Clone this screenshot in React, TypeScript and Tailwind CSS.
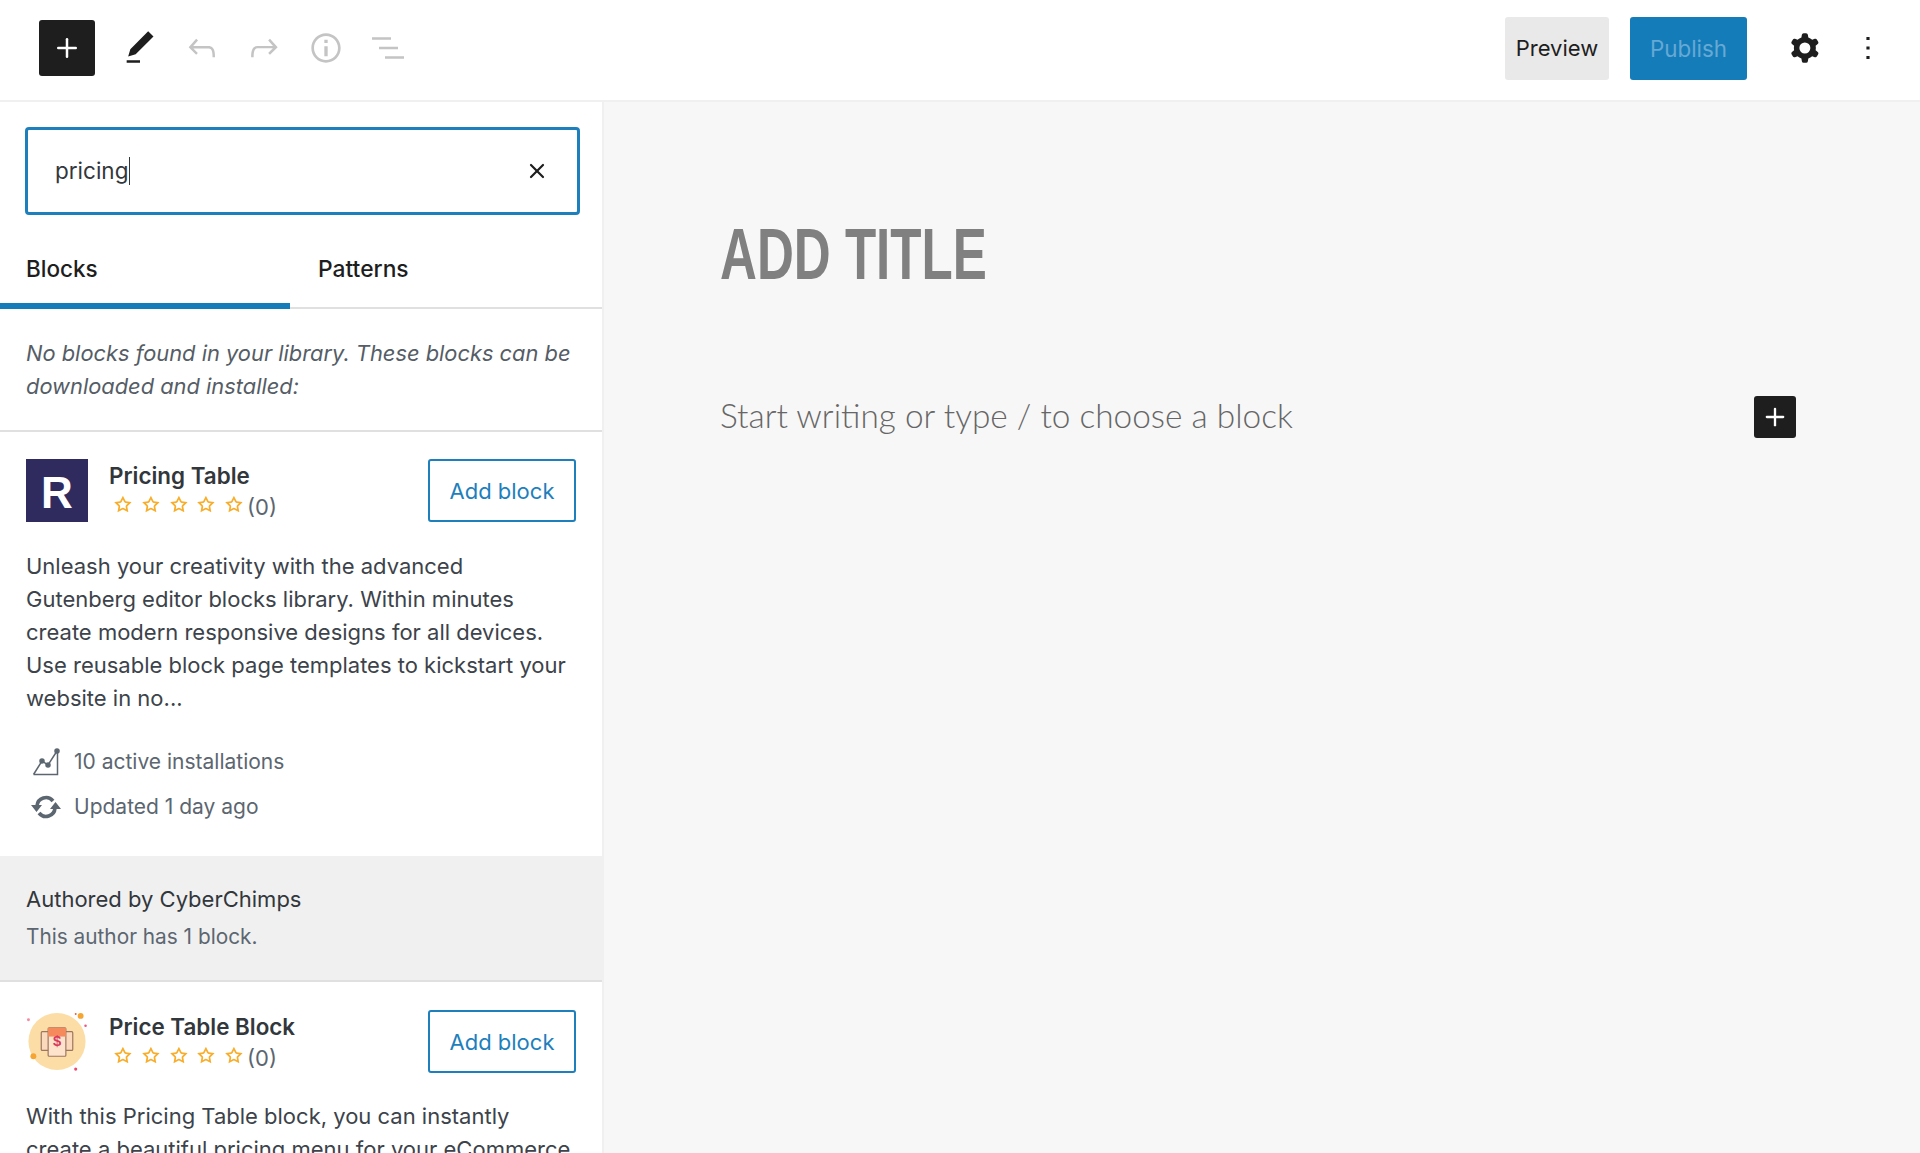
import { Plus, X } from "lucide-react";

const Wp = ({ d, className, box = "0 0 24 24" }: { d: string; className: string; box?: string }) => (
  <svg viewBox={box} fill="currentColor" className={className}>
    <path d={d} fillRule="evenodd" clipRule="evenodd" />
  </svg>
);

const icons = {
  pencil: "M20.1 5.1L16.9 2 6.2 12.7l-1.3 4.4 4.5-1.3L20.1 5.1zM4 20.8h8v-1.5H4v1.5z",
  undo: "M18.3 11.7c-.6-.6-1.4-.9-2.3-.9H6.7l2.9-3.3-1.1-1-4.5 5L8.5 16l1-1-2.7-2.7H16c.5 0 .9.2 1.3.5 1 1 1 3.4 1 4.5v.3h1.5v-.2c0-1.5 0-4.3-1.5-5.7z",
  redo: "M15.6 6.5l-1.1 1 2.9 3.3H8c-.9 0-1.7.3-2.3.9-1.4 1.5-1.4 4.2-1.4 5.6v.2h1.5v-.3c0-1.1 0-3.5 1-4.5.3-.3.7-.5 1.3-.5h9.2L14.5 15l1.1 1.1 4.6-4.6-4.6-5z",
  info: "M12 3.2c-4.8 0-8.8 3.9-8.8 8.8 0 4.8 3.9 8.8 8.8 8.8 4.8 0 8.8-3.9 8.8-8.8 0-4.8-4-8.8-8.8-8.8zm0 16c-4 0-7.2-3.3-7.2-7.2C4.8 8 8 4.8 12 4.8s7.2 3.3 7.2 7.2c0 4-3.2 7.2-7.2 7.2zM11 17h2v-6h-2v6zm0-8h2V7h-2v2z",
  list: "M2.4 5.6h11.4V7H2.4V5.6zm4.2 5.7H18v1.4H6.6v-1.4zM10.2 17h11.4v1.4H10.2V17z",
  cog: "M10.289 4.836A1 1 0 0111.275 4h1.306a1 1 0 01.987.836l.244 1.466c.787.26 1.503.679 2.108 1.218l1.393-.522a1 1 0 011.216.437l.653 1.13a1 1 0 01-.23 1.273l-1.148.944a6.025 6.025 0 010 2.435l1.149.946a1 1 0 01.23 1.272l-.653 1.13a1 1 0 01-1.216.436l-1.394-.522c-.605.54-1.32.958-2.108 1.218l-.244 1.466a1 1 0 01-.987.836h-1.306a1 1 0 01-.986-.836l-.244-1.466a5.995 5.995 0 01-2.108-1.218l-1.394.522a1 1 0 01-1.217-.436l-.653-1.131a1 1 0 01.23-1.272l1.149-.946a6.026 6.026 0 010-2.435l-1.148-.944a1 1 0 01-.23-1.272l.653-1.131a1 1 0 011.217-.437l1.393.522a5.994 5.994 0 012.108-1.218l.244-1.466zM14.929 12a3 3 0 11-6 0 3 3 0 016 0z",
  more: "M13 19h-2v-2h2v2zm0-6h-2v-2h2v2zm0-6h-2V5h2v2z",
  star: "M9.706 8.646a.25.25 0 01-.188.137l-4.626.672a.25.25 0 00-.139.427l3.348 3.262a.25.25 0 01.072.222l-.79 4.607a.25.25 0 00.362.264l4.138-2.176a.25.25 0 01.233 0l4.137 2.175a.25.25 0 00.363-.263l-.79-4.607a.25.25 0 01.072-.222l3.347-3.262a.25.25 0 00-.139-.427l-4.626-.672a.25.25 0 01-.188-.137l-2.069-4.192a.25.25 0 00-.448 0L9.706 8.646zM12 7.39l-.948 1.921a1.75 1.75 0 01-1.317.957l-2.12.308 1.534 1.495c.412.402.6.982.503 1.55l-.362 2.11 1.896-.997a1.75 1.75 0 011.629 0l1.895.997-.362-2.11a1.75 1.75 0 01.504-1.55l1.533-1.495-2.12-.308a1.75 1.75 0 01-1.317-.957L12 7.39z",
};

const Stars = () => (
  <div className="flex items-center mt-[-1px]">
    {[0, 1, 2, 3, 4].map((i) => (
      <Wp key={i} d={icons.star} className="w-[27.8px] h-[27.8px] text-[#f8ae2b]" />
    ))}
    <span className="ml-[-1px] pt-[4px] text-[22px] leading-[28px] text-[#5c6670]">(0)</span>
  </div>
);

const BlockHeader = ({ name, logo }: { name: string; logo: React.ReactNode }) => (
  <div className="flex items-start">
    {logo}
    <div className="ml-[21px] w-[319px] pt-[2.5px]">
      <div className="text-[22.4px] leading-[28px] font-semibold text-[#32373c]">{name}</div>
      <Stars />
    </div>
    <button className="w-[148px] h-[63px] shrink-0 rounded-[3px] border-2 border-[#1e7fbd] bg-white pt-[1px] text-[22px] text-[#1e7fbd]">
      Add block
    </button>
  </div>
);

const RLogo = (
  <div className="w-[62px] h-[63px] shrink-0 flex items-center justify-center bg-[#2f2b5f] pt-[5px] font-['Liberation_Sans',sans-serif] text-white text-[44px] leading-none font-bold">
    R
  </div>
);

const PriceLogo = (
  <svg viewBox="0 0 62 64" className="w-[62px] h-[63px] shrink-0">
    <circle cx="31" cy="32" r="29" fill="#fcdda5" />
    <circle cx="55" cy="6" r="3" fill="#f6a530" />
    <circle cx="50" cy="4" r="1" fill="#e8603c" />
    <circle cx="2" cy="10" r="1.5" fill="#f58aa0" />
    <circle cx="60" cy="16" r="1.3" fill="#f0567a" />
    <circle cx="7" cy="47" r="3" fill="#f6a530" />
    <circle cx="50" cy="60" r="1.6" fill="#f0466a" />
    <rect x="15" y="22" width="32" height="19" fill="#fbd9bd" stroke="#9c7660" strokeWidth="1.2" rx="1" />
    <rect x="22" y="18" width="18" height="29" fill="#fde3cc" stroke="#9c7660" strokeWidth="1.2" rx="1" />
    <rect x="22" y="18" width="18" height="9" fill="#f58a5c" />
    <text x="31" y="37" fontSize="15" fontWeight="700" fill="#d83a5c" textAnchor="middle" fontFamily="Liberation Sans, sans-serif">
      $
    </text>
  </svg>
);

const ChartIcon = () => (
  <svg viewBox="0 0 28 28" className="w-[28px] h-[28px] text-[#5c6670]" fill="none" stroke="currentColor" strokeWidth="1.5">
    <path d="M1.5 26.5L10 13l6 4 9-14M1.5 26.5H25.5V3" />
    <circle cx="10" cy="13" r="2" fill="currentColor" />
    <circle cx="16" cy="17" r="2" fill="currentColor" />
    <circle cx="25" cy="3" r="2" fill="currentColor" />
  </svg>
);

const UpdateIcon = () => (
  <svg viewBox="0 0 32 28" className="w-[32px] h-[28px] text-[#5c6670]" fill="none">
    <path d="M7 13a9 9 0 0 1 16-5M25 15a9 9 0 0 1-16 5" stroke="currentColor" strokeWidth="3.6" />
    <path d="M1 12h11l-5.5 7zM31 16H20l5.5-7z" fill="currentColor" />
  </svg>
);

export default function App() {
  return (
    <div className="w-[1920px] h-[1153px] flex flex-col overflow-hidden bg-white font-['Inter',sans-serif] text-[#1e1e1e] antialiased">
      <header className="h-[102px] shrink-0 flex items-center border-b-2 border-[#f0f0f0] bg-white pl-[39px] pr-[33px] pb-[4px]">
        <button className="w-[56px] h-[56px] flex items-center justify-center rounded-[3px] bg-[#1e1e1e] text-white">
          <Plus size={30} strokeWidth={2} />
        </button>
        <Wp d={icons.pencil} className="ml-[25px] w-[40px] h-[40px] text-[#1e1e1e]" />
        <Wp d={icons.undo} className="ml-[22px] w-[40px] h-[40px] text-[#c4c4c4]" />
        <Wp d={icons.redo} className="ml-[22px] w-[40px] h-[40px] text-[#c4c4c4]" />
        <Wp d={icons.info} className="ml-[22px] w-[40px] h-[40px] text-[#c4c4c4]" />
        <Wp d={icons.list} className="ml-[22px] w-[40px] h-[40px] text-[#c4c4c4]" />
        <button className="ml-auto w-[104px] h-[63px] rounded-[3px] bg-[#e9e9e9] pt-[1px] text-[22px] text-[#1e1e1e]">Preview</button>
        <button className="ml-[21px] w-[117px] h-[63px] rounded-[3px] bg-[#157cba] pt-[1px] text-[22.4px] text-[#66a9d4]">Publish</button>
        <Wp d={icons.cog} className="ml-[36px] w-[44px] h-[44px] text-[#1e1e1e]" />
        <Wp d={icons.more} className="ml-[22px] w-[38px] h-[38px] text-[#1e1e1e]" />
      </header>

      <div className="flex flex-1 min-h-0">
        <aside className="w-[604px] shrink-0 overflow-hidden border-r-2 border-[#f0f0f0] bg-white">
          <div className="px-[25px] pt-[25px]">
            <div className="w-[555px] h-[88px] flex items-center rounded-[4px] border-[3px] border-[#1e7fbd] pl-[27px] pr-[28px]">
              <span className="text-[22.5px] text-[#32373c]">pricing</span>
              <span className="ml-[1px] w-[1px] h-[28px] bg-[#32373c]" />
              <X size={24} strokeWidth={2.2} className="ml-auto text-[#1e1e1e]" />
            </div>
          </div>

          <div className="mt-[16px] h-[78px] flex items-stretch border-b-2 border-[#e0e0e0]">
            <div className="w-[290px] h-[78px] shrink-0 flex items-center border-b-[6px] border-[#157cba] pl-[26px] pt-[4px] text-[22.5px] font-medium text-[#1e1e1e]">
              Blocks
            </div>
            <div className="flex items-center pl-[28px] text-[22.8px] font-medium text-[#1e1e1e]">Patterns</div>
          </div>

          <p className="h-[123px] border-b-2 border-[#e0e0e0] px-[26px] pt-[28px] text-[21.85px] leading-[33px] italic text-[#555d66]">
            No blocks found in your library. These blocks can be downloaded and installed:
          </p>

          <section className="px-[26px] pt-[27px] h-[424px]">
            <BlockHeader name="Pricing Table" logo={RLogo} />
            <p className="mt-[28px] text-[22px] leading-[33px] text-[#3c434a]">
              Unleash your creativity with the advanced Gutenberg editor blocks library. Within minutes create modern responsive designs for all devices. Use reusable block page templates to kickstart your website in no...
            </p>
            <div className="mt-[24px] flex items-center h-[45px] text-[21px] text-[#5c6670]">
              <span className="w-[40px] flex justify-center"><ChartIcon /></span>
              <span className="ml-[8px]">10 active installations</span>
            </div>
            <div className="flex items-center h-[45px] text-[21px] text-[#5c6670]">
              <span className="w-[40px] flex justify-center"><UpdateIcon /></span>
              <span className="ml-[8px]">Updated 1 day ago</span>
            </div>
          </section>

          <section className="h-[126px] border-b-2 border-[#e0e0e0] bg-[#f0f0f0] px-[26px] pt-[28px]">
            <div className="text-[22px] leading-[30px] text-[#32373c]">Authored by CyberChimps</div>
            <div className="mt-[9px] text-[20.8px] leading-[28px] text-[#5c6670]">This author has 1 block.</div>
          </section>

          <section className="px-[26px] pt-[28px]">
            <BlockHeader name="Price Table Block" logo={PriceLogo} />
            <p className="mt-[27px] text-[22px] leading-[33px] text-[#3c434a]">
              With this Pricing Table block, you can instantly create a beautiful pricing menu for your eCommerce
            </p>
          </section>
        </aside>

        <main className="flex-1 bg-[#f7f7f7] pl-[116px] pr-[124px] pt-[112px]">
          <h1 className="origin-left scale-x-[0.7] font-['Liberation_Sans',sans-serif] text-[73px] leading-[80px] font-bold text-[#808080]">
            ADD TITLE
          </h1>
          <div className="mt-[102px] flex items-center justify-between">
            <span className="pb-[5px] font-['Lato',sans-serif] text-[33.4px] leading-[32px] font-light text-[#666666]">
              Start writing or type / to choose a block
            </span>
            <button className="w-[42px] h-[42px] flex items-center justify-center rounded-[3px] bg-[#1e1e1e] text-white">
              <Plus size={28} strokeWidth={2} />
            </button>
          </div>
        </main>
      </div>
    </div>
  );
}
